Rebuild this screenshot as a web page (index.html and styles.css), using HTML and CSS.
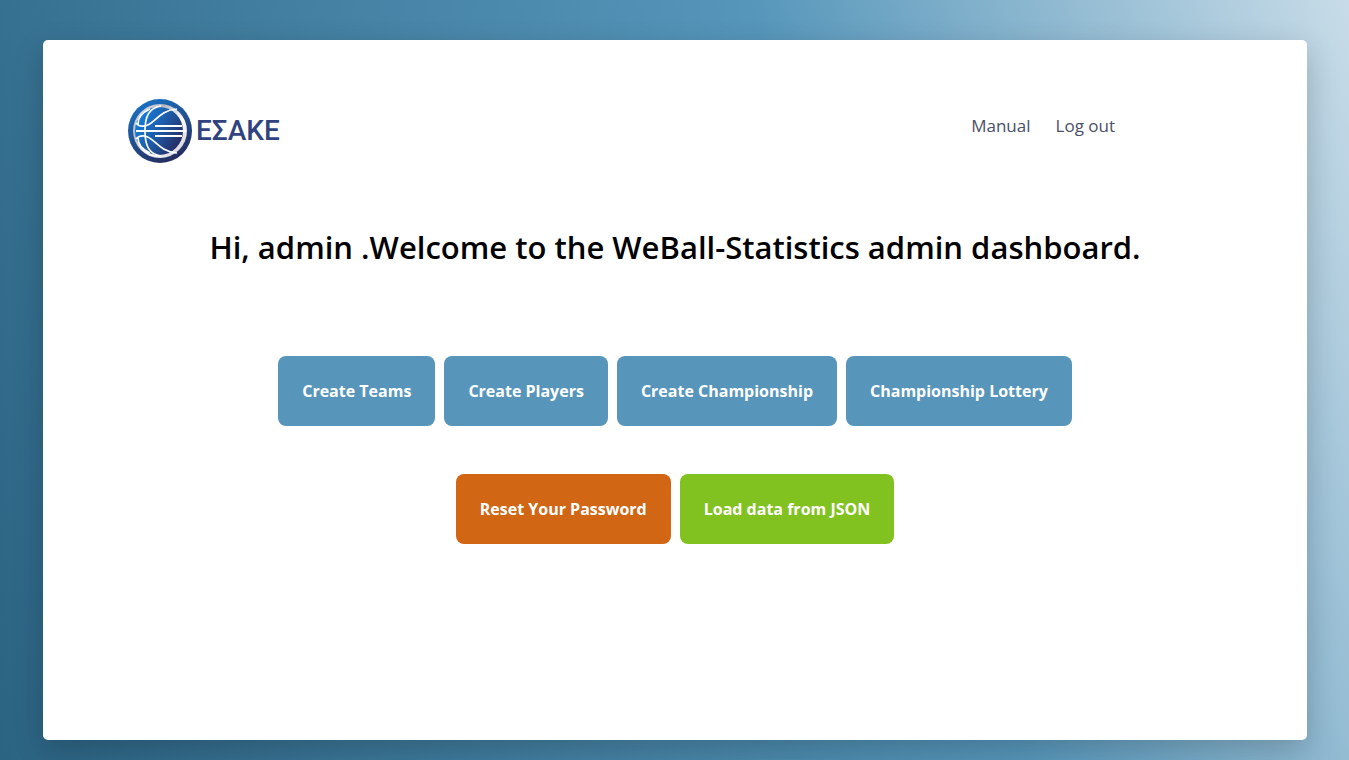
FILE: index.html
```html
<!DOCTYPE html>
<html lang="en">
<head>
  <meta charset="utf-8">
  <meta name="viewport" content="width=device-width, initial-scale=1">
  <title>WeBall-Statistics Admin Dashboard</title>
  <link rel="stylesheet" href="styles.css">
</head>
<body>
  <div class="card">
    <header class="header">
      <a class="brand" href="#">
        <svg class="brand-ball" viewBox="0 0 64 64" aria-hidden="true">
          <defs>
            <linearGradient id="rim" x1="0.2" y1="0" x2="0.7" y2="1">
              <stop offset="0" stop-color="#1673c8"/>
              <stop offset="0.5" stop-color="#23508f"/>
              <stop offset="1" stop-color="#252a5c"/>
            </linearGradient>
            <linearGradient id="ball" x1="0" y1="0.2" x2="1" y2="0.8">
              <stop offset="0" stop-color="#1682df"/>
              <stop offset="0.45" stop-color="#1d5fae"/>
              <stop offset="1" stop-color="#25275a"/>
            </linearGradient>
            <linearGradient id="silver" x1="0" y1="0" x2="1" y2="1">
              <stop offset="0" stop-color="#e6eaf0"/>
              <stop offset="0.3" stop-color="#b4b8c0"/>
              <stop offset="0.6" stop-color="#ffffff"/>
              <stop offset="1" stop-color="#c4c4ca"/>
            </linearGradient>
          </defs>
          <circle cx="32" cy="32" r="32" fill="url(#rim)"/>
          <circle cx="32" cy="32" r="27" fill="url(#silver)"/>
          <ellipse cx="31" cy="32" rx="24" ry="24" fill="url(#ball)"/>
          <g fill="none" stroke="#ffffff" stroke-width="1.7">
            <path d="M8 24Q11 28 17 27C27 25 31 11 49 10"/>
            <path d="M8 40Q11 36 17 37C27 39 31 53 49 54"/>
            <path d="M33 7C21 9 17 17 17 32S21 55 33 57"/>
            <path d="M22 10C13 14 10 20 10 25M22 54C13 50 10 44 10 39"/>
            <path d="M27 27H54M8 32H58M27 37H54" stroke-width="2"/>
          </g>
        </svg>
        <span class="brand-name">ΕΣΑΚΕ</span>
      </a>
      <nav class="nav" aria-label="Main">
        <a href="#">Manual</a>
        <a href="#">Log out</a>
      </nav>
    </header>
    <main class="dashboard">
      <h1 class="title">Hi, admin .Welcome to the WeBall-Statistics admin dashboard.</h1>
      <div class="actions">
        <button class="button" type="button">Create Teams</button>
        <button class="button" type="button">Create Players</button>
        <button class="button" type="button">Create Championship</button>
        <button class="button" type="button">Championship Lottery</button>
      </div>
      <div class="actions">
        <button class="button button-reset" type="button">Reset Your Password</button>
        <button class="button button-load" type="button">Load data from JSON</button>
      </div>
    </main>
  </div>
</body>
</html>
```
FILE: styles.css
```css
* {
  box-sizing: border-box;
}

body {
  display: flex;
  min-height: 100vh;
  margin: 0;
  padding: 40px 42px 20px 43px;
  background: linear-gradient(70deg, #2b6382 0%, #5696ba 63%, #c8dce8 100%);
  font-family: "Open Sans", "Noto Sans", sans-serif;
}

.card {
  flex: 1;
  padding: 59px 85px 40px;
  border-radius: 5px;
  background: #fff;
  box-shadow: 0 10px 30px rgba(0, 0, 0, 0.2);
}

.header {
  display: flex;
  align-items: center;
  justify-content: space-between;
  padding-right: 107px;
}

.brand {
  display: flex;
  align-items: center;
  gap: 4px;
  color: #30437f;
  text-decoration: none;
}

.brand-ball {
  width: 64px;
  height: 64px;
}

.brand-name {
  font-family: Roboto, sans-serif;
  font-size: 28px;
  font-weight: 500;
  line-height: 32px;
}

.nav {
  display: flex;
  gap: 25px;
  padding-bottom: 10px;
}

.nav a {
  color: #4a5068;
  font-size: 17px;
  line-height: 24px;
  text-decoration: none;
}

.dashboard {
  display: flex;
  flex-direction: column;
  gap: 48px;
  padding-top: 64px;
}

.title {
  margin: 0 0 41px;
  color: #000;
  font-size: 31px;
  font-weight: 600;
  line-height: 40px;
  text-align: center;
}

.actions {
  display: flex;
  flex-wrap: wrap;
  justify-content: center;
  gap: 9px;
}

.button {
  padding: 23px 24px;
  border: 0;
  border-radius: 8px;
  background: #5796ba;
  color: #fff;
  font-family: inherit;
  font-size: 16px;
  font-weight: 700;
  line-height: 24px;
  cursor: pointer;
}

.button-reset {
  background: #d16615;
}

.button-load {
  background: #81c220;
}
```
